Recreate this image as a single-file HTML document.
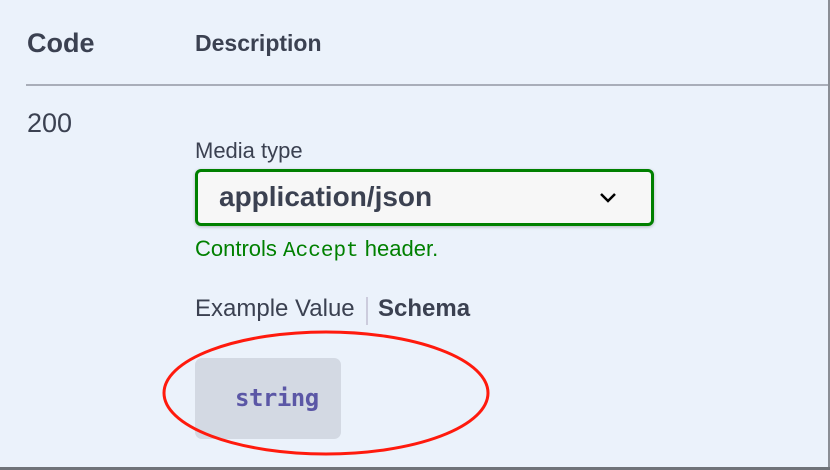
<!DOCTYPE html>
<html><head><style>
body{margin:0;width:830px;height:470px;background:#ebf2fb;position:relative;overflow:hidden;font-family:"Liberation Sans",Arial,sans-serif;color:#3b4151}
.a{position:absolute;white-space:nowrap}
</style></head><body>
<div class="a" style="left:27px;top:28px;font-size:27px;font-weight:bold">Code</div>
<div class="a" style="left:195px;top:30px;font-size:23px;font-weight:bold">Description</div>
<div class="a" style="left:26px;top:84px;width:804px;height:2px;background:#a9aeb9"></div>
<div class="a" style="left:27px;top:108px;font-size:27px">200</div>
<div class="a" style="left:195px;top:138px;font-size:22px">Media type</div>
<div class="a" style="left:195px;top:169px;width:453px;height:51px;border:3px solid #008000;border-radius:6px;background:#f7f7f7;box-shadow:0 1px 3px rgba(0,0,0,.25)"></div>
<div class="a" style="left:219px;top:181px;font-size:28px;font-weight:bold">application/json</div>
<svg class="a" style="left:598px;top:190px" width="22" height="16"><path d="M3 4 L10 11 L17 4" stroke="#000" stroke-width="2.5" fill="none"/></svg>
<div class="a" style="left:195px;top:236px;font-size:22px;color:#008000">Controls <span style="font-family:'Liberation Mono',monospace;font-size:21px">Accept</span> header.</div>
<div class="a" style="left:195px;top:295px;font-size:24px">Example Value</div>
<div class="a" style="left:366px;top:297px;width:2px;height:28px;background:#ccd"></div>
<div class="a" style="left:378px;top:295px;font-size:24px;font-weight:bold">Schema</div>
<div class="a" style="left:195px;top:358px;width:146px;height:81px;background:#d3d9e3;border-radius:7px"></div>
<div class="a" style="left:235px;top:384px;font-size:24px;font-weight:bold;font-family:'DejaVu Sans Mono','Liberation Mono',monospace;color:#5b57a6;letter-spacing:-0.5px">string</div>
<svg class="a" style="left:0;top:0" width="830" height="470"><ellipse cx="326" cy="393" rx="162" ry="61" fill="none" stroke="#ff1a0d" stroke-width="3"/><rect x="828" y="0" width="2" height="470" fill="#8a8e95"/><rect x="0" y="467" width="830" height="3" fill="#6f7379"/></svg>
</body></html>
